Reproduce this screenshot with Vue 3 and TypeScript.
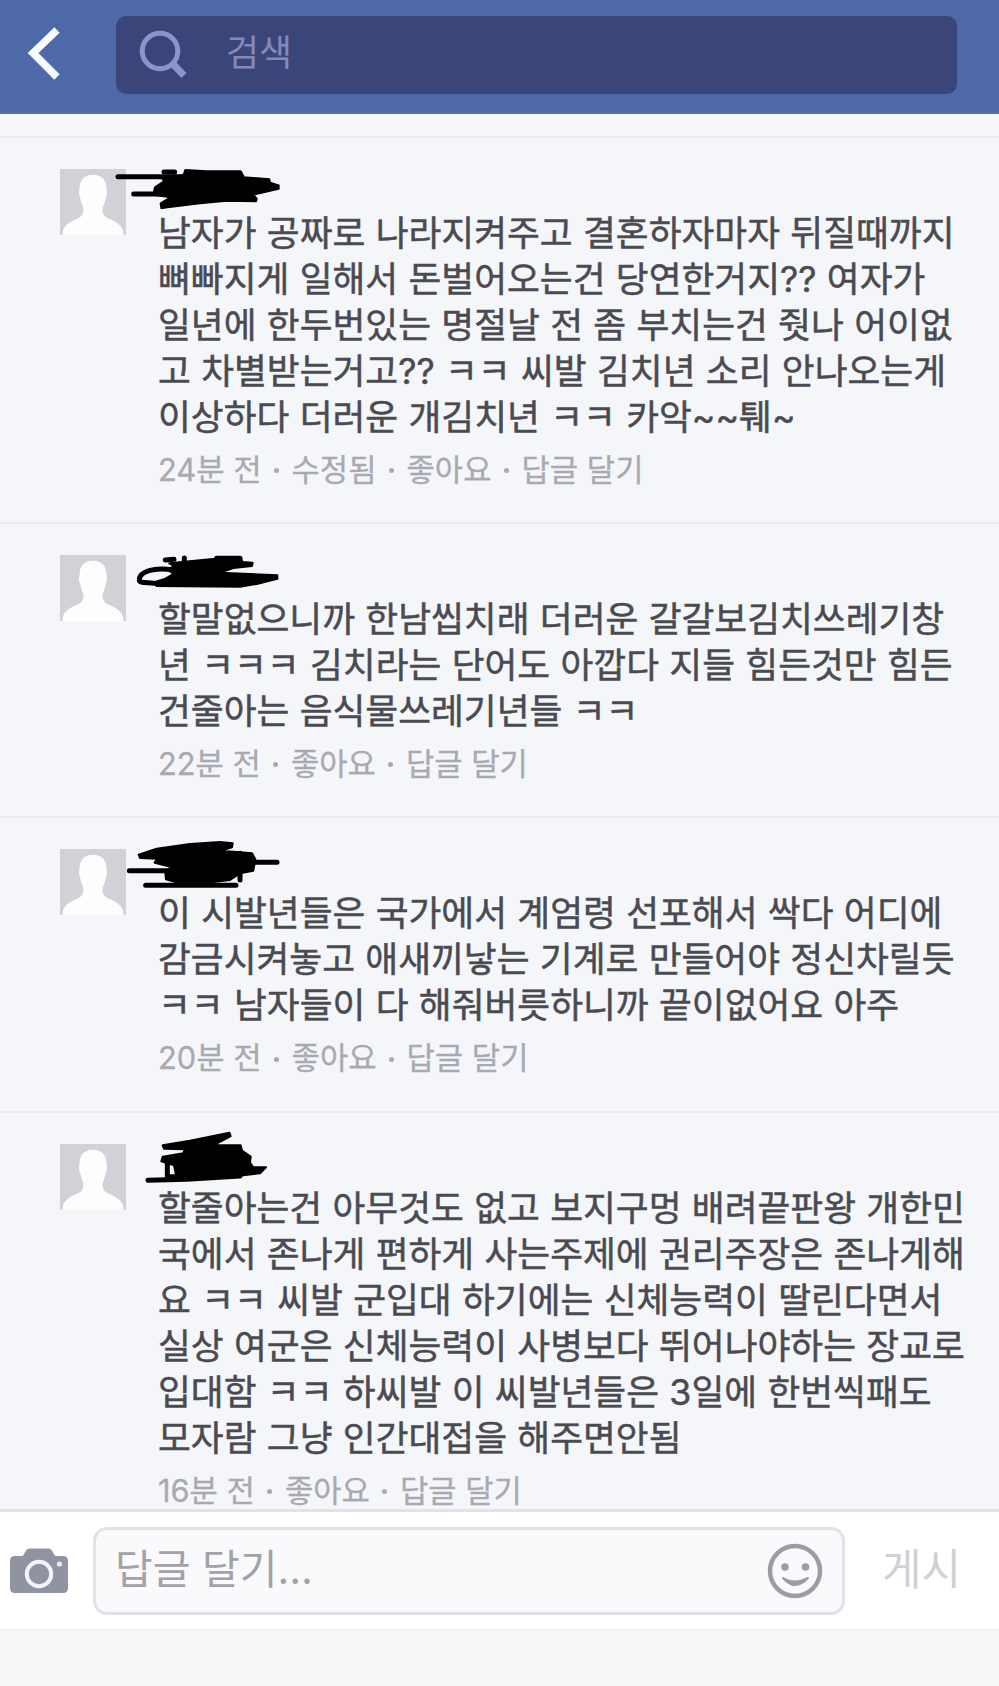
<template>
    <div class="page">
        <header class="top-bar">
            <svg class="back" width="36" height="60" viewBox="0 0 36 60">
                <path d="M32 7 L8 30 L32 54" />
            </svg>
            <div class="search">
                <svg class="search-icon" width="50" height="50" viewBox="0 0 50 50">
                    <circle cx="21" cy="21" r="17.8" />
                    <path class="handle" d="M34 34 L45 45.5" />
                </svg>
                <span class="search-text">검색</span>
            </div>
        </header>

        <main class="comments">
            <article v-for="item in comments" :key="item.time" class="comment">
                <svg class="avatar" viewBox="0 0 196 196">
                    <rect width="196" height="196" fill="#d1d1d7" />
                    <path
                        fill="#fdfdfe"
                        d="M98 17 C124 17 139 33 138 60 C141 66 140 78 136 86 C134 98 130 106 127 114 C125 130 130 140 142 146 C166 156 184 166 188 186 L188 196 L8 196 L8 186 C12 166 30 156 54 146 C66 140 71 130 69 114 C66 106 62 98 60 86 C56 78 55 66 58 60 C57 33 72 17 98 17 Z"
                    />
                </svg>
                <svg class="scribble" :viewBox="item.box">
                    <path v-for="(d, i) in item.fills" :key="'f' + i" class="ink-fill" :d="d" />
                    <path v-for="(d, i) in item.strokes" :key="'s' + i" class="ink-line" :d="d" />
                </svg>
                <div class="body">
                    <p v-for="(line, i) in item.lines" :key="i" class="line">{{ line }}</p>
                    <p class="meta">
                        <span>{{ item.time }}</span>
                        <template v-for="action in item.actions" :key="action">
                            <i class="dot"></i>
                            <span>{{ action }}</span>
                        </template>
                    </p>
                </div>
            </article>
        </main>

        <footer class="composer">
            <svg class="camera" width="58" height="46" viewBox="0 0 58 46">
                <path
                    fill="#9093a0"
                    d="M5 8 H12 C14 8 15 3 17 1.5 C18 0.5 19 0.5 21 0.5 H37 C39 0.5 40 0.5 41 1.5 C43 3 44 8 46 8 H53 Q58 8 58 13 V40 Q58 45 53 45 H5 Q0 45 0 40 V13 Q0 8 5 8 Z"
                />
                <circle cx="29" cy="26" r="12.2" fill="none" stroke="#f1f4fb" stroke-width="4" />
                <circle cx="49.5" cy="16" r="2.6" fill="#e6e9f1" />
            </svg>
            <div class="reply">
                <span class="reply-text">답글 달기...</span>
                <svg class="smile" width="56" height="56" viewBox="0 0 56 56">
                    <circle cx="28" cy="28" r="25" fill="none" stroke="#9c9ca3" stroke-width="4.5" />
                    <circle cx="18" cy="24" r="3.8" fill="#9c9ca3" />
                    <circle cx="38.5" cy="24" r="3.8" fill="#9c9ca3" />
                    <path d="M16 35 Q28 49 41 35 Q28 42 16 35 Z" fill="#9c9ca3" stroke="#9c9ca3" stroke-width="2" stroke-linejoin="round" />
                </svg>
            </div>
            <span class="post">게시</span>
        </footer>
    </div>
</template>

<script setup lang="ts">
interface Comment {
    time: string
    actions: string[]
    lines: string[]
    // marker strokes that hide the name
    box: string
    fills: string[]
    strokes: string[]
}

const comments: Comment[] = [
    {
        time: '24분 전',
        actions: ['수정됨', '좋아요', '답글 달기'],
        lines: [
            '남자가 공짜로 나라지켜주고 결혼하자마자 뒤질때까지',
            '뼈빠지게 일해서 돈벌어오는건 당연한거지?? 여자가',
            '일년에 한두번있는 명절날 전 좀 부치는건 줫나 어이없',
            '고 차별받는거고?? ㅋㅋ 씨발 김치년 소리 안나오는게',
            '이상하다 더러운 개김치년 ㅋㅋ 카악~~퉤~',
        ],
        box: '180 18 600 192',
        fills: ['M436 60 L500 64 L602 64 L612 82 L688 88 L690 98 L716 106 L716 116 L640 134 L650 146 L648 154 L560 152 L480 160 L364 174 L362 160 L392 142 L340 134 L345 112 L372 94 L366 84 L430 76 Z'],
        strokes: ['M234 80 L430 80', 'M281 132 L360 132', 'M372 66 L404 66', 'M370 168 L470 148'],
    },
    {
        time: '22분 전',
        actions: ['좋아요', '답글 달기'],
        lines: [
            '할말없으니까 한남씹치래 더러운 갈갈보김치쓰레기창',
            '년 ㅋㅋㅋ 김치라는 단어도 아깝다 지들 힘든것만 힘든',
            '건줄아는 음식물쓰레기년들 ㅋㅋ',
        ],
        box: '180 96 600 192',
        fills: [
            'M388 160 L510 148 L600 142 L608 156 L638 158 L636 168 L580 174 L540 188 L712 196 L712 206 L650 222 L600 230 L350 228 L345 216 L372 208 L400 192 L384 178 L402 168 Z',
        ],
        strokes: ['M400 180 C340 170 300 186 298 208 C296 224 330 214 360 224', 'M376 150 L402 148 M433 144 L433 160', 'M530 145 L600 145'],
    },
    {
        time: '20분 전',
        actions: ['좋아요', '답글 달기'],
        lines: [
            '이 시발년들은 국가에서 계엄령 선포해서 싹다 어디에',
            '감금시켜놓고 애새끼낳는 기계로 만들어야 정신차릴듯',
            'ㅋㅋ 남자들이 다 해줘버릇하니까 끝이없어요 아주',
        ],
        box: '180 78 600 192',
        fills: [
            'M296 134 L350 116 L450 102 L540 96 L578 100 L576 112 L545 122 L636 130 L646 148 L640 182 L600 190 L570 210 L440 226 L378 208 L376 188 L392 170 L344 158 L352 146 L300 144 Z',
        ],
        strokes: ['M268 182 L400 182', 'M640 157 L711 157', 'M317 226 L588 226', 'M600 130 L600 210'],
    },
    {
        time: '16분 전',
        actions: ['좋아요', '답글 달기'],
        lines: [
            '할줄아는건 아무것도 없고 보지구멍 배려끝판왕 개한민',
            '국에서 존나게 편하게 사는주제에 권리주장은 존나게해',
            '요 ㅋㅋ 씨발 군입대 하기에는 신체능력이 딸린다면서',
            '실상 여군은 신체능력이 사병보다 뛰어나야하는 장교로',
            '입대함 ㅋㅋ 하씨발 이 씨발년들은 3일에 한번씩패도',
            '모자람 그냥 인간대접을 해주면안됨',
        ],
        box: '180 63 600 192',
        fills: [
            'M368 106 L450 92 L568 68 L572 78 L520 106 L602 106 L606 122 L632 140 L630 158 L640 172 L678 172 L660 190 L560 202 L440 210 L410 204 L402 166 L364 154 L368 140 L430 130 L434 118 L372 116 Z',
        ],
        strokes: ['M324 211 L440 208 L600 198', 'M382 160 L382 200 L420 200'],
    },
]
</script>

<style>
body {
    background: #f7f7f8;
}
</style>

<style scoped>
.page {
    display: flex;
    flex-direction: column;
    width: 999px;
    height: 1686px;
    overflow: hidden;
    background: #f7f7f8;
    font-family: Inter, "Noto Sans CJK KR", sans-serif;
}
.top-bar {
    display: flex;
    flex: none;
    align-items: flex-start;
    box-sizing: border-box;
    height: 114px;
    padding: 16px 42px 0 25px;
    background: #4e69a8;
    border-bottom: 2px solid #5a6f9b;
}
.back {
    margin: 7px 55px 0 0;
}
.back path {
    fill: none;
    stroke: #f8fcff;
    stroke-width: 7.5;
}
.search {
    display: flex;
    flex: 1;
    align-items: center;
    height: 78px;
    border-radius: 10px;
    background: #3a4679;
}
.search-icon {
    margin: 0 37px 0 23px;
    fill: none;
    stroke: #8e93cb;
    stroke-width: 5;
}
.handle {
    stroke-width: 7;
}
.search-text {
    font-size: 36px;
    line-height: 70px;
    margin-top: -5px;
    color: #8488ba;
}
.comments {
    flex: none;
    box-sizing: border-box;
    height: 1395px;
    padding-top: 21.6px;
    overflow: hidden;
    background: #f7f7fa;
}
.comment {
    position: relative;
    display: flex;
    align-items: flex-start;
    box-sizing: border-box;
    padding: 31px 0 36.4px 60px;
    border-top: 2px solid #ebecf0;
    background: #f5f6fa;
}
.avatar {
    flex: none;
    width: 66px;
    height: 66px;
}
.scribble {
    position: absolute;
    left: 100px;
    top: 18px;
    width: 200px;
    height: 64px;
}
.ink-fill {
    fill: #000;
    stroke: #000;
    stroke-width: 6;
    stroke-linejoin: round;
}
.ink-line {
    fill: none;
    stroke: #000;
    stroke-width: 15;
    stroke-linecap: round;
    stroke-linejoin: round;
}
.body {
    padding: 41px 0 0 32px;
}
.line {
    margin: 0;
    font-size: 35.7px;
    line-height: 46px;
    word-spacing: 0.3px;
    white-space: nowrap;
    color: #4a4a51;
    -webkit-text-stroke: 0.5px #4a4a51;
}
.meta {
    display: flex;
    align-items: center;
    margin: 14px 0 0;
    height: 32px;
    font-size: 30.8px;
    line-height: 32px;
    white-space: nowrap;
    color: #a9a9b1;
    -webkit-text-stroke: 0.3px #a9a9b1;
}
.dot {
    width: 5px;
    height: 5px;
    margin: 2px 13px 0 12px;
    border-radius: 50%;
    background: #a9a9b1;
}
.composer {
    display: flex;
    flex: none;
    align-items: center;
    box-sizing: border-box;
    height: 122px;
    padding-left: 10px;
    border-top: 3px solid #e4e2e8;
    border-bottom: 2px solid #f3f0f5;
    background: #fff;
}
.camera {
    flex: none;
}
.reply {
    display: flex;
    align-items: center;
    justify-content: space-between;
    box-sizing: border-box;
    width: 752px;
    height: 88px;
    margin-left: 25px;
    padding: 0 19px 0 19px;
    border: 3px solid #e3e1e7;
    border-radius: 14px;
    background: #faf9fc;
}
.reply-text {
    margin-top: -4px;
    font-size: 41px;
    line-height: 60px;
    color: #a2a2a8;
}
.post {
    margin: -4px 0 0 37px;
    font-size: 43px;
    line-height: 60px;
    color: #d0d0d5;
}
</style>
